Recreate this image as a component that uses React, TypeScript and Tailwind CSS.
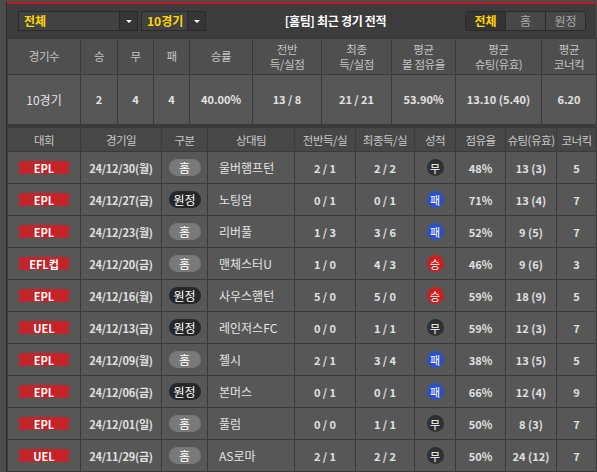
import React from "react";

const FONT = { fontFamily: '"Noto Sans CJK KR", "Noto Sans", sans-serif' };

type Result = "승" | "무" | "패";

interface Match {
  league: string;
  date: string;
  side: "홈" | "원정";
  opponent: string;
  half: string;
  full: string;
  result: Result;
  poss: string;
  shots: string;
  corners: string;
}

const matches: Match[] = [
  { league: "EPL", date: "24/12/30(월)", side: "홈", opponent: "울버햄프턴", half: "2 / 1", full: "2 / 2", result: "무", poss: "48%", shots: "13 (3)", corners: "5" },
  { league: "EPL", date: "24/12/27(금)", side: "원정", opponent: "노팅엄", half: "0 / 1", full: "0 / 1", result: "패", poss: "71%", shots: "13 (4)", corners: "7" },
  { league: "EPL", date: "24/12/23(월)", side: "홈", opponent: "리버풀", half: "1 / 3", full: "3 / 6", result: "패", poss: "52%", shots: "9 (5)", corners: "7" },
  { league: "EFL컵", date: "24/12/20(금)", side: "홈", opponent: "맨체스터U", half: "1 / 0", full: "4 / 3", result: "승", poss: "46%", shots: "9 (6)", corners: "3" },
  { league: "EPL", date: "24/12/16(월)", side: "원정", opponent: "사우스햄턴", half: "5 / 0", full: "5 / 0", result: "승", poss: "59%", shots: "18 (9)", corners: "5" },
  { league: "UEL", date: "24/12/13(금)", side: "원정", opponent: "레인저스FC", half: "0 / 0", full: "1 / 1", result: "무", poss: "59%", shots: "12 (3)", corners: "7" },
  { league: "EPL", date: "24/12/09(월)", side: "홈", opponent: "첼시", half: "2 / 1", full: "3 / 4", result: "패", poss: "38%", shots: "13 (5)", corners: "5" },
  { league: "EPL", date: "24/12/06(금)", side: "원정", opponent: "본머스", half: "0 / 1", full: "0 / 1", result: "패", poss: "66%", shots: "12 (4)", corners: "9" },
  { league: "EPL", date: "24/12/01(일)", side: "홈", opponent: "풀럼", half: "0 / 0", full: "1 / 1", result: "무", poss: "50%", shots: "8 (3)", corners: "7" },
  { league: "UEL", date: "24/11/29(금)", side: "홈", opponent: "AS로마", half: "2 / 1", full: "2 / 2", result: "무", poss: "50%", shots: "24 (12)", corners: "7" },
];

const summaryCols = [
  { w: 73, label: ["경기수"], value: "10경기" },
  { w: 37, label: ["승"], value: "2" },
  { w: 36, label: ["무"], value: "4" },
  { w: 36, label: ["패"], value: "4" },
  { w: 63, label: ["승률"], value: "40.00%" },
  { w: 69, label: ["전반", "득/실점"], value: "13 / 8" },
  { w: 70, label: ["최종", "득/실점"], value: "21 / 21" },
  { w: 64, label: ["평균", "볼 점유율"], value: "53.90%" },
  { w: 86, label: ["평균", "슈팅(유효)"], value: "13.10 (5.40)" },
  { w: 55, label: ["평균", "코너킥"], value: "6.20" },
];

const matchCols = [
  { w: 73, label: "대회" },
  { w: 81, label: "경기일" },
  { w: 46, label: "구분" },
  { w: 87, label: "상대팀" },
  { w: 61, label: "전반득/실" },
  { w: 59, label: "최종득/실" },
  { w: 41, label: "성적" },
  { w: 50, label: "점유율" },
  { w: 51, label: "슈팅(유효)" },
  { w: 40, label: "코너킥" },
];

const resultColor: Record<Result, string> = {
  승: "bg-[#c8201f]",
  무: "bg-[#2f2f2f]",
  패: "bg-[#2c4fc4]",
};

function Select({ label, width }: { label: string; width: number }) {
  return (
    <div
      className="flex h-[20px] border border-[#2a2a2a] bg-[#424242]"
      style={{ width }}
    >
      <span className="flex-1 pl-[5px] text-[12px] leading-[18px] font-bold text-[#ffd600]">
        {label}
      </span>
      <span className="flex w-[18px] items-center justify-center border-l border-[#2a2a2a] bg-[#363636]">
        <span className="h-0 w-0 border-x-[3px] border-t-[3px] border-x-transparent border-t-white" />
      </span>
    </div>
  );
}

const td = "border border-[#3a3a3a] p-0 whitespace-nowrap";

export default function App() {
  return (
    <div
      className="h-[472px] w-[597px] overflow-hidden bg-[#4b4b4b] pt-[2px] pl-[6px]"
      style={FONT}
    >
      <div className="w-[590px] border-l border-[#2e2e2e] border-b border-b-[#2e2e2e]">
        {/* top bar */}
        <div className="flex h-[36px] items-center border-t-2 border-[#c4161c] bg-[#3c3c3c] pr-[10px] pl-[11px]">
          <Select label="전체" width={120} />
          <div className="w-[3px]" />
          <Select label="10경기" width={65} />
          <div className="flex-1 text-center text-[12px] font-bold tracking-[-0.3px] text-white">
            [홈팀] 최근 경기 전적
          </div>
          <div className="flex h-[20px] w-[121px] overflow-hidden rounded-[3px] border border-[#2a2a2a] text-[12px]">
            <span className="flex flex-1 items-center justify-center bg-[#343434] font-bold text-[#ffd600]">
              전체
            </span>
            <span className="flex flex-1 items-center justify-center border-l border-[#2a2a2a] bg-[#484848] text-[#a8a8a8]">
              홈
            </span>
            <span className="flex flex-1 items-center justify-center border-l border-[#2a2a2a] bg-[#484848] text-[#a8a8a8]">
              원정
            </span>
          </div>
        </div>

        {/* summary */}
        <table className="w-[589px] table-fixed border-collapse text-center">
          <colgroup>
            {summaryCols.map((c, i) => (
              <col key={i} style={{ width: c.w }} />
            ))}
          </colgroup>
          <tbody>
            <tr className="h-[36px] bg-[#4f4f4f]">
              {summaryCols.map((c, i) => (
                <td
                  key={i}
                  className={`${td} text-[11.5px] leading-[15px] tracking-[-0.4px] text-[#c4c4c4]`}
                >
                  {c.label.map((l) => (
                    <div key={l} className="h-[15px]">
                      {l}
                    </div>
                  ))}
                </td>
              ))}
            </tr>
            <tr className="h-[50px] bg-[#575757]">
              {summaryCols.map((c, i) => (
                <td
                  key={i}
                  className={`${td} text-[#e2e2e2] ${
                    i === 0 ? "text-[12px]" : "text-[11px] font-bold"
                  }`}
                >
                  {c.value}
                </td>
              ))}
            </tr>
          </tbody>
        </table>

        <div className="h-[2px] bg-[#3a3a3a]" />

        {/* matches */}
        <table className="w-[589px] table-fixed border-collapse text-center">
          <colgroup>
            {matchCols.map((c, i) => (
              <col key={i} style={{ width: c.w }} />
            ))}
          </colgroup>
          <thead>
            <tr className="h-[24px] bg-[#474747]">
              {matchCols.map((c, i) => (
                <th
                  key={i}
                  className={`${td} overflow-hidden text-[11.5px] leading-[22px] font-normal tracking-[-0.5px] text-[#c8c8c8]`}
                >
                  {c.label}
                </th>
              ))}
            </tr>
          </thead>
          <tbody>
            {matches.map((m, i) => (
              <tr
                key={i}
                className="h-[32px] bg-[#575757] text-[11px] leading-[14px] text-[#e0e0e0]"
              >
                <td className={td}>
                  <span className="mx-auto flex h-[13px] w-[50px] items-center justify-center bg-[#c4232a] text-[11px] font-bold text-white">
                    {m.league}
                  </span>
                </td>
                <td className={`${td} font-bold tracking-[-0.2px]`}>{m.date}</td>
                <td className={td}>
                  <span
                    className={`mx-auto flex h-[17px] w-[32px] items-center justify-center rounded-full text-[12px] text-white ${
                      m.side === "홈" ? "bg-[#797979]" : "bg-[#262626]"
                    }`}
                  >
                    {m.side}
                  </span>
                </td>
                <td className={`${td} pl-[11px] text-left text-[12px] text-[#e4e4e4]`}>
                  {m.opponent}
                </td>
                <td className={`${td} font-bold`}>{m.half}</td>
                <td className={`${td} font-bold`}>{m.full}</td>
                <td className={td}>
                  <span
                    className={`mx-auto flex h-[17px] w-[17px] items-center justify-center rounded-full text-[11px] text-white ${resultColor[m.result]}`}
                  >
                    {m.result}
                  </span>
                </td>
                <td className={`${td} font-bold`}>{m.poss}</td>
                <td className={`${td} font-bold`}>{m.shots}</td>
                <td className={`${td} font-bold`}>{m.corners}</td>
              </tr>
            ))}
          </tbody>
        </table>
      </div>
    </div>
  );
}
